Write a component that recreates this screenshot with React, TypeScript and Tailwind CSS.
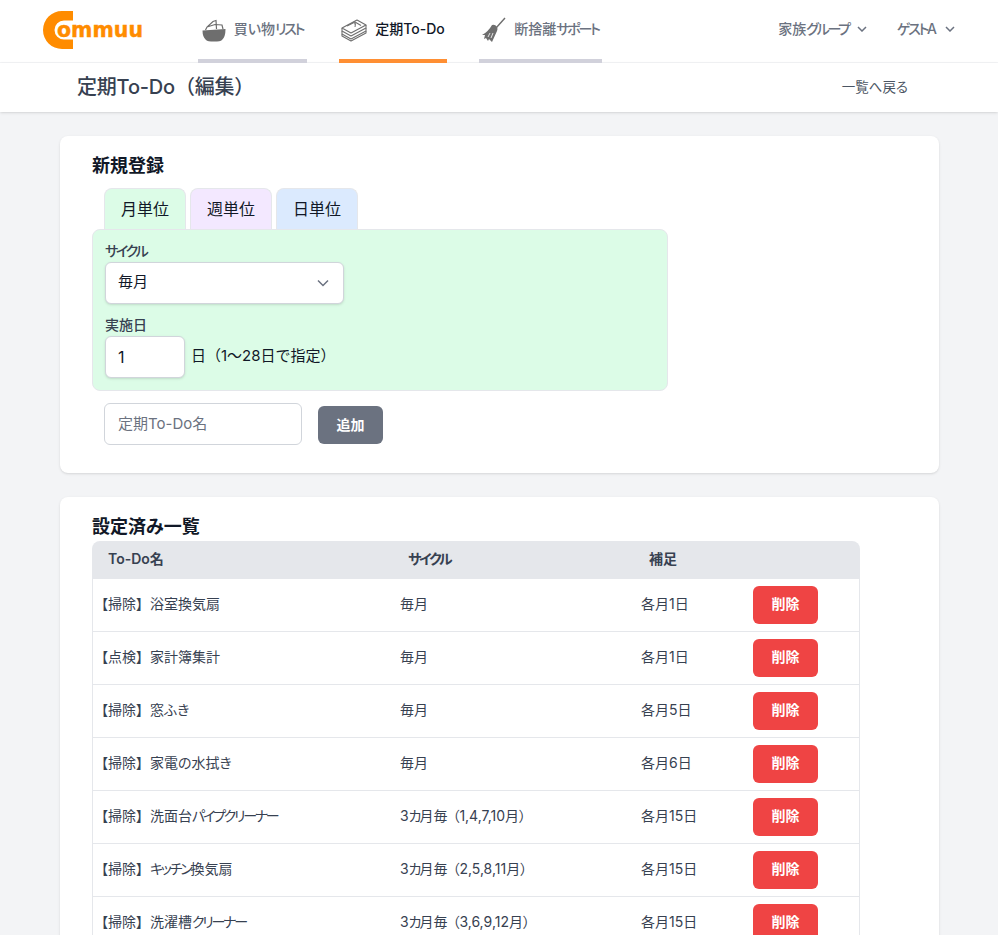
import React from 'react';

const FONT = "font-['Inter','Noto_Sans_CJK_JP',sans-serif] [font-feature-settings:'palt']";

const rows = [
  { name: '【掃除】浴室換気扇', cycle: '毎月', note: '各月1日' },
  { name: '【点検】家計簿集計', cycle: '毎月', note: '各月1日' },
  { name: '【掃除】窓ふき', cycle: '毎月', note: '各月5日' },
  { name: '【掃除】家電の水拭き', cycle: '毎月', note: '各月6日' },
  { name: '【掃除】洗面台パイプクリーナー', cycle: '3カ月毎（1,4,7,10月）', note: '各月15日' },
  { name: '【掃除】キッチン換気扇', cycle: '3カ月毎（2,5,8,11月）', note: '各月15日' },
  { name: '【掃除】洗濯槽クリーナー', cycle: '3カ月毎（3,6,9,12月）', note: '各月15日' },
];

// katakana is set narrower in the reference font, brackets keep more room
const Jp = ({ text }: { text: string }) => (
  <span>
    {text.split(/([ァ-ヶー]+|】|（)/).map((part, i) => {
      if (/^[ァ-ヶー]+$/.test(part)) return <span key={i} className="tracking-[-0.16em]">{part}</span>;
      if (part === '】') return <span key={i} className="mr-[7px]">{part}</span>;
      if (part === '（') return <span key={i} className="ml-[5px]">{part}</span>;
      return part;
    })}
  </span>
);

const Logo = () => (
  <div className="flex items-center h-[38px] w-[100px] relative">
    <svg width="30" height="38" viewBox="0 0 30 38" className="shrink-0">
      <path
        fill="#ff8c00"
        d="M30 0 H19 A19 19 0 0 0 19 38 H30 V28.5 H21 A9.5 9.5 0 0 1 21 9.5 H30 Z"
      />
    </svg>
    <span className="absolute left-[14px] top-[8px] font-['DejaVu_Sans',sans-serif] font-bold text-[20.5px] leading-[22px] text-[#ff8c00] [-webkit-text-stroke:0.4px_#ff8c00] [font-feature-settings:normal]">
      ommuu
    </span>
  </div>
);

const BasketIcon = () => (
  <svg width="24" height="24" viewBox="0 0 24 24" className="shrink-0">
    <path d="M0.5 12.5 L23.5 11 Q23.5 19 20 22 Q18.5 23.5 12 23.5 Q5.5 23.5 4 22 Q0.5 19 0.5 12.5 Z" fill="#6e6e6e" />
    <path d="M3.5 12 L5 9 L11 3.5 L14 2.5 L14.5 11 M5 9 L13 6.5 L20 7 L21 11" fill="none" stroke="#6e6e6e" strokeWidth="1.2" />
  </svg>
);

const BookIcon = () => (
  <svg width="26" height="24" viewBox="0 0 26 24" className="shrink-0">
    <g fill="none" stroke="#6e6e6e" strokeWidth="1.1" strokeLinejoin="round">
      <path d="M1 10 L16 2 L25 7 L10 15 Z" />
      <path d="M1 10 V13 L10 18 L25 10 V7" />
      <path d="M1 13 V16 L10 21 L25 13 V10" />
      <path d="M1 16 V18 L10 23 L25 15 V13" />
      <path d="M6 8 L14 4 L20 7.5" />
    </g>
    <path d="M13 6 L14.5 5.5 L14 9" fill="none" stroke="#6e6e6e" strokeWidth="1" />
  </svg>
);

const BroomIcon = () => (
  <svg width="24" height="26" viewBox="0 0 24 26" className="shrink-0">
    <path d="M14 11 L23 1" stroke="#6e6e6e" strokeWidth="1.4" fill="none" />
    <path d="M10 8 Q13 7 15 10 Q16 12 15 14 L10 25 L7 22 L6 24 L4 21 L2 22 L3 18 L0 18 Q6 15 10 8 Z" fill="#6e6e6e" />
    <path d="M8 16 L6 20 M11 16 L9 21" stroke="#ffffff" strokeWidth="0.8" fill="none" />
  </svg>
);

const Chevron = () => (
  <svg width="10" height="6" viewBox="0 0 10 6" className="shrink-0">
    <path d="M1 1 L5 5 L9 1" fill="none" stroke="#6b7280" strokeWidth="1.5" />
  </svg>
);

const NavTab = ({ icon, label, width, active }: { icon: React.ReactNode; label: string; width: string; active?: boolean }) => (
  <div className={`h-[63px] border-b-4 flex items-center justify-center gap-2 whitespace-nowrap ${width} ${active ? 'border-[#ff8f33]' : 'border-[#d1d1db]'}`}>
    {icon}
    <span className={`text-sm font-medium pb-[2px] ${active ? 'text-[#111827]' : 'text-[#6b7280]'}`}><Jp text={label} /></span>
  </div>
);

const App: React.FC = () => {
  return (
    <div className={`h-[935px] overflow-hidden bg-[#f3f4f6] ${FONT}`}>
      <nav className="h-[63px] bg-white border-b border-[#f3f4f6] flex pl-[43px] pr-[43px]">
        <div className="w-[155px] pt-[11px]">
          <Logo />
        </div>
        <div className="flex gap-8 h-[63px]">
          <NavTab icon={<BasketIcon />} label="買い物リスト" width="w-[109px]" />
          <NavTab icon={<BookIcon />} label="定期To-Do" width="w-[108px]" active />
          <NavTab icon={<BroomIcon />} label="断捨離サポート" width="w-[123px]" />
        </div>
        <div className="ml-auto flex items-center gap-[30px] text-sm font-medium text-[#6b7280] h-[58px]">
          <div className="flex items-center gap-2">
            <Jp text="家族グループ" />
            <Chevron />
          </div>
          <div className="flex items-center gap-2">
            <span><Jp text="ゲスト" />A</span>
            <Chevron />
          </div>
        </div>
      </nav>

      <header className="h-[49px] bg-white shadow flex items-center justify-between pl-[77px] pr-[90px]">
        <h1 className="text-xl font-medium text-[#374151] leading-7 pb-px tracking-[-0.01em] [font-feature-settings:normal]">定期To-Do（編集）</h1>
        <a className="text-[13.5px] text-[#4b5563] pb-px">一覧へ戻る</a>
      </header>

      <main className="pl-[60px] pr-[59px] pt-6">
        <section className="bg-white rounded-lg shadow-sm h-[337px] px-8 pt-4">
          <h2 className="text-lg font-semibold text-[#111827] leading-7">新規登録</h2>
          <div className="flex gap-1 pl-3 mt-2">
            <div className="w-[82px] h-[41px] bg-[#dcfce7] border border-[#e5e7eb] border-b-0 rounded-t-lg flex items-center justify-center text-base text-[#111827]">月単位</div>
            <div className="w-[82px] h-[41px] bg-[#f3e8ff] border border-[#e5e7eb] border-b-0 rounded-t-lg flex items-center justify-center text-base text-[#111827]">週単位</div>
            <div className="w-[82px] h-[41px] bg-[#dbeafe] border border-[#e5e7eb] border-b-0 rounded-t-lg flex items-center justify-center text-base text-[#111827]">日単位</div>
          </div>
          <div className="w-[576px] h-[162px] bg-[#dcfce7] border border-[#e5e7eb] rounded-lg px-3 pt-[11px]">
            <label className="block text-sm font-medium text-[#374151] leading-5 mb-px"><Jp text="サイクル" /></label>
            <div className="w-[239px] h-[42px] bg-white border border-[#d1d5db] rounded-md shadow-sm flex items-center justify-between pl-3 pr-[14px] text-[15px] text-[#111827]">
              <span className="pb-px">毎月</span>
              <svg width="12" height="8" viewBox="0 0 12 8">
                <path d="M1 1.5 L6 6.5 L11 1.5" fill="none" stroke="#6b7280" strokeWidth="1.5" />
              </svg>
            </div>
            <label className="block text-sm font-medium text-[#374151] leading-5 mt-[11px] mb-px">実施日</label>
            <div className="flex items-center gap-[6px]">
              <div className="w-[80px] h-[42px] bg-white border border-[#d1d5db] rounded-md shadow-sm flex items-center pl-3 text-base text-[#111827]">1</div>
              <span className="text-[15px] text-[#111827] pb-[2px] [font-feature-settings:normal]">日（1〜28日で指定）</span>
            </div>
          </div>
          <div className="flex items-start gap-4 pl-3 mt-3">
            <div className="w-[198px] h-[42px] bg-white border border-[#d1d5db] rounded-md flex items-center pl-[13px] text-[15px] text-[#6b7280]">定期To-Do名</div>
            <button className="w-[65px] h-[38px] mt-[3px] bg-[#6b7280] rounded-md text-white text-sm font-semibold pb-px">追加</button>
          </div>
        </section>

        <section className="bg-white rounded-lg shadow-sm mt-6 px-8 pt-4 pb-6">
          <h2 className="text-lg font-semibold text-[#111827] leading-7">設定済み一覧</h2>
          <table className="w-[768px] table-fixed border-separate border-spacing-0 text-sm text-[#374151]">
            <colgroup>
              <col className="w-[300px]" />
              <col className="w-[241px]" />
              <col className="w-[112px]" />
              <col />
            </colgroup>
            <thead>
              <tr className="h-[38px] bg-[#e5e7eb] text-left">
                <th className="pl-4 pb-[2px] font-semibold rounded-tl-lg">To-Do名</th>
                <th className="pl-4 pb-[2px] font-semibold"><Jp text="サイクル" /></th>
                <th className="pl-4 pb-[2px] font-semibold">補足</th>
                <th className="rounded-tr-lg"></th>
              </tr>
            </thead>
            <tbody>
              {rows.map((row) => (
                <tr key={row.name} className="h-[53px]">
                  <td className="pl-2 pb-[2px] border-l border-b border-[#e5e7eb]"><Jp text={row.name} /></td>
                  <td className="pl-2 pb-[2px] border-b border-[#e5e7eb]"><Jp text={row.cycle} /></td>
                  <td className="pl-2 pb-[2px] border-b border-[#e5e7eb]">{row.note}</td>
                  <td className="pl-2 border-r border-b border-[#e5e7eb]">
                    <button className="block w-[65px] h-[38px] bg-[#ef4444] rounded-md text-white text-sm font-semibold pb-[2px]">削除</button>
                  </td>
                </tr>
              ))}
            </tbody>
          </table>
        </section>
      </main>
    </div>
  );
};

export default App;
